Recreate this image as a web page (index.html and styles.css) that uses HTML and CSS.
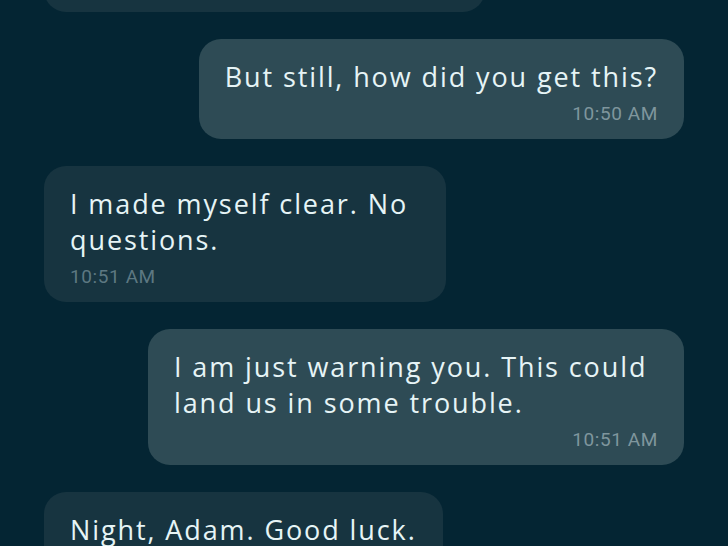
FILE: index.html
```html
<!DOCTYPE html>
<html lang="en">
<head>
    <meta charset="UTF-8">
    <meta name="viewport" content="width=device-width, initial-scale=1.0">
    <title>Chat</title>
    <link rel="stylesheet" href="styles.css">
</head>
<body>
    <div class="chat">
        <div class="msg msg-in msg-top">
            <p class="msg-text">You know I can't tell you that.</p>
            <span class="msg-time">10:49 AM</span>
        </div>

        <div class="msg msg-out">
            <p class="msg-text">But still, how did you get this?</p>
            <span class="msg-time">10:50 AM</span>
        </div>

        <div class="msg msg-in msg-clear">
            <p class="msg-text">I made myself clear. No questions.</p>
            <span class="msg-time">10:51 AM</span>
        </div>

        <div class="msg msg-out msg-wide">
            <p class="msg-text">I am just warning you. This could land us in some trouble.</p>
            <span class="msg-time">10:51 AM</span>
        </div>

        <div class="msg msg-in msg-last">
            <p class="msg-text">Night, Adam. Good luck.</p>
            <span class="msg-time">10:52 AM</span>
        </div>
    </div>
</body>
</html>
```

FILE: styles.css
```css
body {
    margin: 0;
    background-color: #042533;
    font-family: "Open Sans", "Noto Sans", sans-serif;
    overflow: hidden;
}

.chat {
    display: flex;
    flex-direction: column;
    gap: 27px;
    padding: 0 44px;
    margin-top: -124px;
}

/* Message bubbles */
.msg {
    box-sizing: border-box;
    display: flex;
    flex-direction: column;
    padding: 20px 26px 13px;
    border-radius: 22px;
}

.msg-in {
    align-self: flex-start;
    background-color: #173440;
}

.msg-out {
    align-self: flex-end;
    background-color: #2e4b55;
}

.msg-top {
    width: 441px;
}

.msg-clear {
    width: 402px;
}

.msg-wide {
    width: 536px;
}

.msg-last {
    width: 399px;
}

.msg-text {
    margin: 0;
    color: #e6f4f6;
    font-size: 27px;
    font-weight: 400;
    line-height: 36px;
    letter-spacing: 1.9px;
}

.msg-time {
    margin-top: 7px;
    font-family: Roboto, sans-serif;
    font-size: 19px;
    line-height: 24px;
    letter-spacing: 0.6px;
    color: #5d7882;
}

.msg-out .msg-time {
    align-self: flex-end;
    color: #7f969d;
}
```
